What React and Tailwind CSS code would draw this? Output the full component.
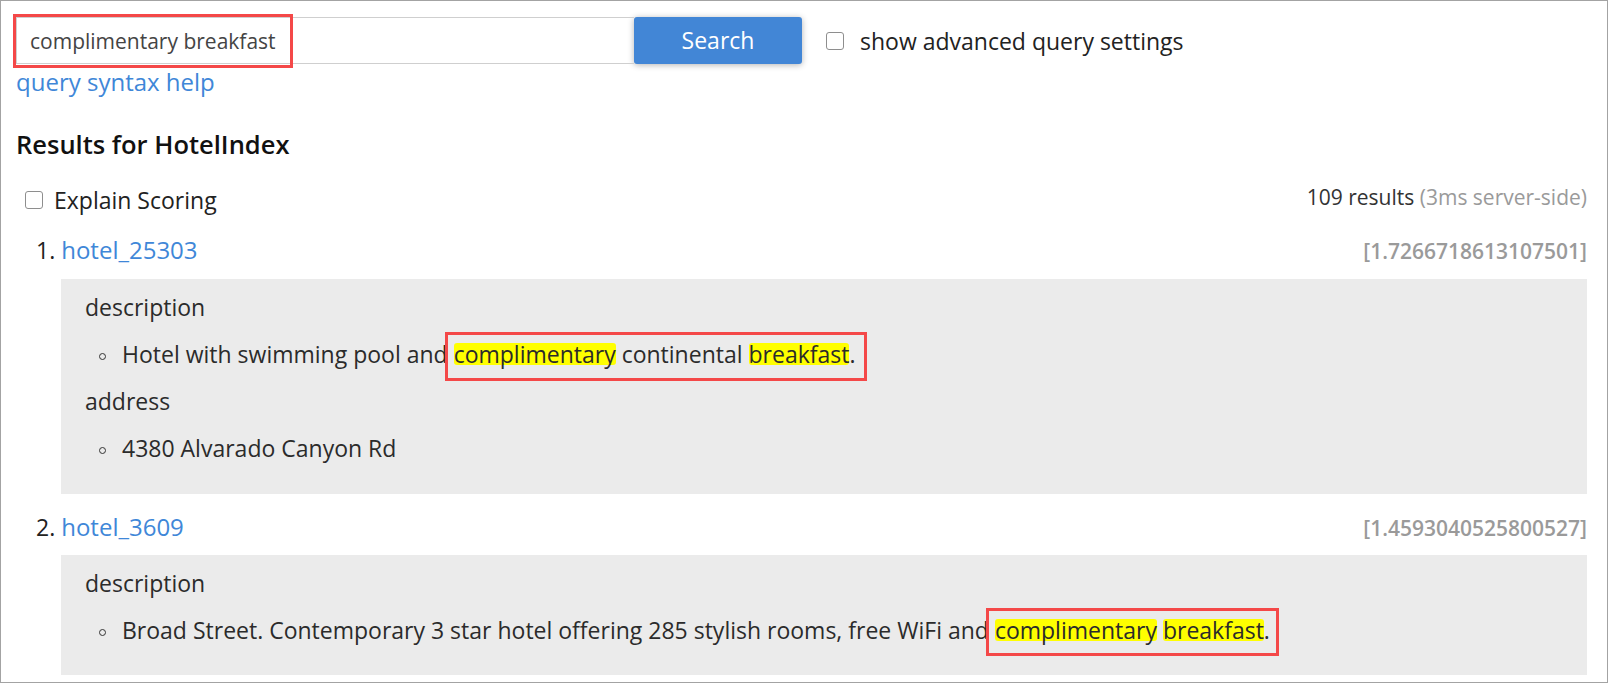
import React from "react";

const Highlight = ({ children }) => (
  <span className="inline-block bg-[#ffff00] leading-[22px] rounded-[3px]">{children}</span>
);

// red annotation frame drawn over the matched words
const Marked = ({ children, wide }) => (
  <span className="relative">
    {children}
    <span
      className={
        wide
          ? "absolute left-[-9px] right-[-12px] top-[-6px] bottom-[-11px] border-[3px] border-[#f44848] pointer-events-none"
          : "absolute left-[-9px] right-[-9px] top-[-6px] bottom-[-10px] border-[3px] border-[#f44848] pointer-events-none"
      }
    />
  </span>
);

const Bullet = () => (
  <span className="inline-block w-[7px] h-[7px] rounded-full border-[1.3px] border-[#333] ml-[14px] mr-[16px] align-[3px]" />
);

const CheckBox = () => (
  <span className="inline-block w-[18px] h-[18px] rounded-[3px] border-[1.5px] border-[#8e8e8e] bg-white shrink-0" />
);

const ResultHeader = ({ index, name, score }) => (
  <div className="flex items-baseline justify-between pl-[20px] leading-[40px]">
    <div className="text-[23px] text-[#222]">
      {index}.{" "}
      <a href="#" className="text-[24px] text-[#3f87d8]">
        {name}
      </a>
    </div>
    <div className="text-[21px] font-semibold text-[#9a9a9a]">[{score}]</div>
  </div>
);

const Field = ({ label }) => <div className="pl-[24px] text-[#2b2b2b]">{label}</div>;

const Item = ({ children }) => (
  <div className="pl-[24px] text-[#2b2b2b] whitespace-nowrap">
    <Bullet />
    {children}
  </div>
);

export default function App() {
  return (
    <div className="w-[1608px] h-[683px] border border-[#a3a3a3] bg-white overflow-hidden font-['Open_Sans',sans-serif] text-[23px] text-[#222]">
      <div className="pl-[15px] pr-[20px] pt-[16px]">
        {/* search row */}
        <div className="flex items-center h-[47px]">
          <div className="relative w-[618px] h-[47px]">
            <input
              defaultValue="complimentary breakfast"
              className="w-full h-full border border-[#cfcfcf] border-r-0 pl-[13px] text-[21px] text-[#444] font-['Open_Sans',sans-serif] outline-none"
            />
            <span className="absolute left-[-3px] top-[-3px] w-[280px] h-[54px] border-[3px] border-[#f44848]" />
          </div>
          <button className="w-[168px] h-[47px] bg-[#4286d6] text-white text-[23px] rounded-[3px] shadow-[0_1px_6px_rgba(0,0,0,0.3)]">
            Search
          </button>
          <span className="ml-[24px] flex items-center">
            <CheckBox />
          </span>
          <span className="ml-[16px] leading-[32px] text-[#222]">show advanced query settings</span>
        </div>

        <div className="mt-[3px] leading-[30px]">
          <a href="#" className="text-[24px] text-[#3f87d8]">
            query syntax help
          </a>
        </div>

        <h3 className="mt-[30px] text-[25.5px] font-semibold leading-[34px] text-[#111]">Results for HotelIndex</h3>

        {/* scoring row */}
        <div className="mt-[22px] flex items-start justify-between">
          <div className="flex items-center pl-[9px] leading-[34px]">
            <CheckBox />
            <span className="ml-[11px]">Explain Scoring</span>
          </div>
          <div className="pt-[2px] text-[21px] leading-[24px]">
            <span className="text-[#333]">109 results</span>{" "}
            <span className="text-[#9a9a9a]">(3ms server-side)</span>
          </div>
        </div>

        {/* result 1 */}
        <div className="mt-[13px]">
          <ResultHeader index={1} name="hotel_25303" score="1.7266718613107501" />
          <div className="mt-[8px] ml-[45px] bg-[#ebebeb] pt-[5px] pb-[22px] leading-[47px]">
            <Field label="description" />
            <Item>
              Hotel with swimming pool and{" "}
              <Marked wide>
                <Highlight>complimentary</Highlight> continental <Highlight>breakfast</Highlight>.
              </Marked>
            </Item>
            <Field label="address" />
            <Item>4380 Alvarado Canyon Rd</Item>
          </div>
        </div>

        {/* result 2 */}
        <div className="mt-[13px]">
          <ResultHeader index={2} name="hotel_3609" score="1.4593040525800527" />
          <div className="mt-[7px] ml-[45px] bg-[#ebebeb] pt-[5px] pb-[21px] leading-[47px]">
            <Field label="description" />
            <Item>
              Broad Street. Contemporary 3 star hotel offering 285 stylish rooms, free WiFi and{" "}
              <Marked>
                <Highlight>complimentary</Highlight> <Highlight>breakfast</Highlight>.
              </Marked>
            </Item>
          </div>
        </div>
      </div>
    </div>
  );
}
